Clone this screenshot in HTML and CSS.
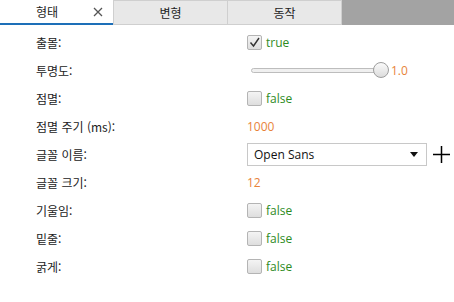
FILE: index.html
```html
<!DOCTYPE html>
<html lang="ko">
<head>
<meta charset="utf-8">
<link rel="stylesheet" href="styles.css">
</head>
<body>
<div class="tabbar">
  <div class="tab active"><span class="tab-label">형태</span><svg class="close" width="10" height="10" viewBox="0 0 10 10"><path d="M1 1 L9 9 M9 1 L1 9" stroke="#555" stroke-width="1.3"/></svg></div>
  <div class="tab">변형</div>
  <div class="tab">동작</div>
  <div class="tab-rest"></div>
</div>
<div class="props">
  <div class="row"><div class="label">출몰:</div><div class="value"><span class="cb checked"><svg width="13" height="13" viewBox="0 0 13 13"><path d="M2.5 6.5 L5.5 10 L11 2" fill="none" stroke="#333" stroke-width="1.4"/></svg></span><span class="bool">true</span></div></div>
  <div class="row"><div class="label">투명도:</div><div class="value"><div class="slider"><div class="track"></div><div class="thumb"></div></div><span class="num">1.0</span></div></div>
  <div class="row"><div class="label">점멸:</div><div class="value"><span class="cb"></span><span class="bool">false</span></div></div>
  <div class="row"><div class="label">점멸 주기 (ms):</div><div class="value"><span class="num">1000</span></div></div>
  <div class="row"><div class="label">글꼴 이름:</div><div class="value"><div class="select"><span>Open Sans</span><svg width="8" height="5" viewBox="0 0 8 5"><path d="M0 0 H8 L4 5 Z" fill="#111"/></svg></div><svg class="plus" width="17" height="17" viewBox="0 0 17 17"><path d="M8.5 0 V17 M0 8.5 H17" stroke="#000" stroke-width="1.5"/></svg></div></div>
  <div class="row"><div class="label">글꼴 크기:</div><div class="value"><span class="num">12</span></div></div>
  <div class="row"><div class="label">기울임:</div><div class="value"><span class="cb"></span><span class="bool">false</span></div></div>
  <div class="row"><div class="label">밑줄:</div><div class="value"><span class="cb"></span><span class="bool">false</span></div></div>
  <div class="row"><div class="label">굵게:</div><div class="value"><span class="cb"></span><span class="bool">false</span></div></div>
</div>
</body>
</html>
```
FILE: styles.css
```css
html, body {
  margin: 0;
  padding: 0;
  background: #fff;
}
body {
  width: 454px;
  height: 302px;
  overflow: hidden;
  font-family: "Noto Sans CJK KR", "Noto Sans", sans-serif;
  font-size: 12px;
  color: #222;
}
.tabbar {
  display: flex;
  height: 25px;
}
.tab {
  box-sizing: border-box;
  width: 114px;
  height: 25px;
  display: flex;
  align-items: center;
  justify-content: center;
  background: #e8e8e8;
  border: 1px solid #cfcfcf;
  border-right: none;
  color: #222;
}
.tab.active {
  width: 113px;
  background: #fff;
  border: none;
  border-bottom: 2px solid #1d6fb8;
  justify-content: space-between;
  padding: 0 10px 0 36px;
}
.close {
  display: block;
}
.tab-rest {
  flex: 1;
  background: #a3a3a3;
  border-left: 1px solid #cfcfcf;
}
.props {
  padding-top: 3px;
}
.row {
  display: flex;
  align-items: center;
  height: 28px;
}
.label {
  width: 211px;
  padding-left: 36px;
}
.value {
  display: flex;
  align-items: center;
  gap: 4px;
}
.cb {
  box-sizing: border-box;
  width: 15px;
  height: 15px;
  border: 1px solid #b4b4b4;
  border-radius: 2px;
  background: linear-gradient(#f4f4f4, #dedede);
  display: flex;
  align-items: center;
  justify-content: center;
}
.bool {
  color: #2e8b1e;
  font-family: "Open Sans", "Noto Sans", sans-serif;
}
.num {
  color: #e8833a;
  font-family: "Open Sans", "Noto Sans", sans-serif;
}
.slider {
  position: relative;
  width: 140px;
  height: 16px;
  display: flex;
  align-items: center;
}
.track {
  box-sizing: border-box;
  margin-left: 4px;
  width: 128px;
  height: 5px;
  border: 1px solid #bdbdbd;
  border-radius: 3px;
  background: #f0f0f0;
}
.thumb {
  position: absolute;
  left: 126px;
  top: 0;
  box-sizing: border-box;
  width: 16px;
  height: 16px;
  border-radius: 50%;
  border: 1px solid #9d9d9d;
  background: linear-gradient(#fafafa, #dcdcdc);
}
.select {
  box-sizing: border-box;
  width: 180px;
  height: 23px;
  border: 1px solid #c8c8c8;
  display: flex;
  align-items: center;
  justify-content: space-between;
  padding: 0 8px 0 6px;
  font-family: "Open Sans", "Noto Sans", sans-serif;
  color: #111;
}
.plus {
  margin-left: 2px;
}
```
